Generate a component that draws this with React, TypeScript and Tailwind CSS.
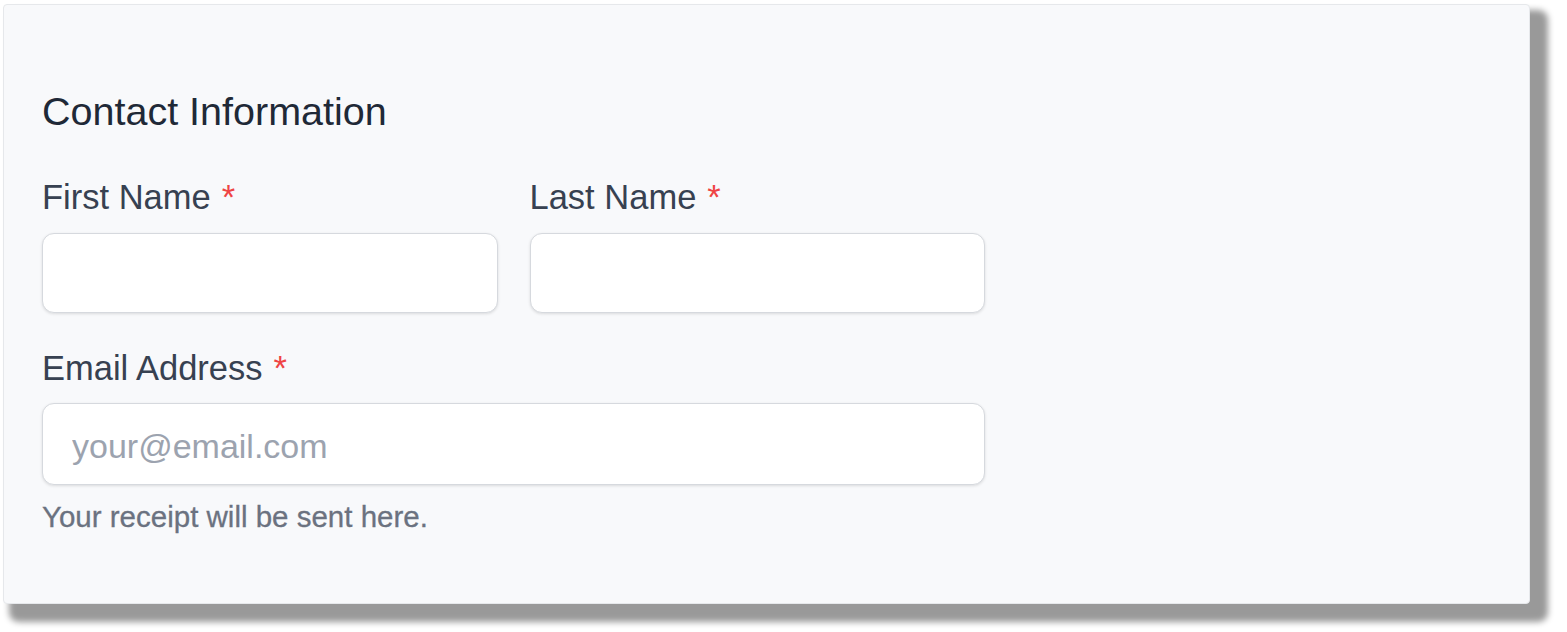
import React from "react";

function Label({ text }: { text: string }) {
  return (
    <label className="block text-[34.5px] leading-[40px] text-[#374151]">
      {text}
      <span className="ml-[11px] text-[#ef4444]">*</span>
    </label>
  );
}

const inputCls =
  "block w-full h-[80px] rounded-[12px] border border-[#d6d9de] bg-white px-[29px] pt-[5px] text-[34px] text-[#374151] shadow-[0_1px_3px_rgba(0,0,0,0.12)] outline-none placeholder:text-[#9ca3af]";

export default function App() {
  return (
    <div
      className="min-h-[632px] w-full bg-white pl-[3px] pt-[4px]"
      style={{ fontFamily: '"Liberation Sans", Arial, sans-serif' }}
    >
      <div className="box-border h-[600px] w-[1527px] rounded-[4px] border border-[#e6e8eb] bg-[#f8f9fb] pl-[38px] pt-[83px] shadow-[12px_12px_6px_6px_rgba(0,0,0,0.4)]">
        <h2 className="text-[39.5px] leading-[46px] text-[#1f2937]">Contact Information</h2>
        <div className="mt-[43px] flex w-[943px] gap-[32px]">
          <div className="flex-1">
            <Label text="First Name" />
            <input className={`${inputCls} mt-[16px]`} />
          </div>
          <div className="flex-1">
            <Label text="Last Name" />
            <input className={`${inputCls} mt-[16px]`} />
          </div>
        </div>
        <div className="mt-[35px] w-[943px]">
          <Label text="Email Address" />
          <input
            className={`${inputCls} mt-[15px] h-[82px]`}
            placeholder="your@email.com"
          />
          <p className="mt-[15px] text-[29.5px] leading-[34px] text-[#6b7280] [-webkit-text-stroke:0.3px_#6b7280]">
            Your receipt will be sent here.
          </p>
        </div>
      </div>
    </div>
  );
}
